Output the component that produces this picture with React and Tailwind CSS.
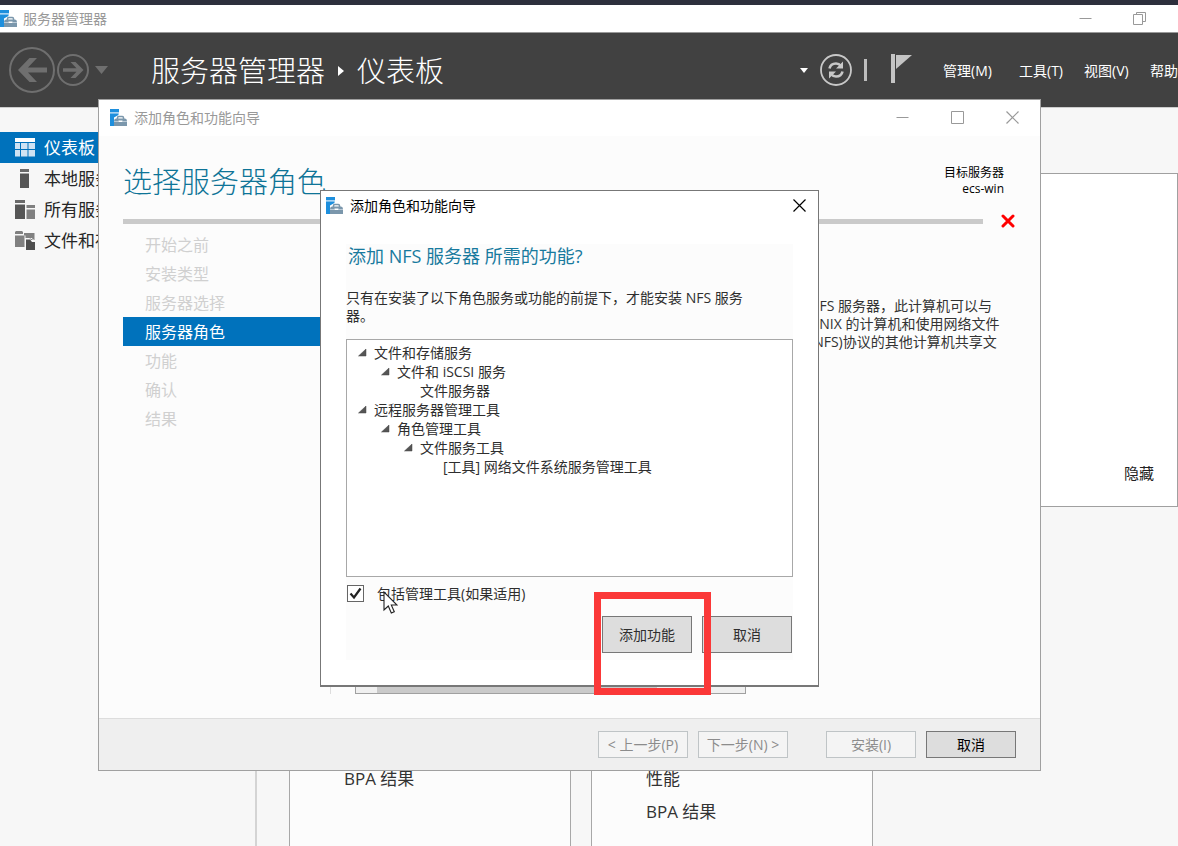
import React from "react";

function ServerIcon() {
  return (
    <svg width="18" height="17" viewBox="0 0 18 17" className="shrink-0" aria-hidden="true">
      <path d="M0 0h9v3H0z" fill="#1e8fdd" />
      <path d="M0 3h9v1.500H0z" fill="#a9d3f2" />
      <path d="M0 4.500h8.500V6L4 8.500V17H0z" fill="#1e8fdd" />
      <path d="M7.500 10V8.700q0-1.200 1.200-1.200h3.600q1.200 0 1.200 1.200V10" fill="none" stroke="#7b97ac" strokeWidth="1.500" />
      <path d="M4 12q0-2.500 2-2.500h9q2 0 2 2.500v5H4z" fill="#7b97ac" />
      <path d="M4 12.200h4.500v0.900H4zM12.500 12.200H17v0.900h-4.500z" fill="#cfdbe4" />
      <path d="M8.500 11.500h4V13h-4z" fill="#fff" />
    </svg>
  );
}

function WinIcon({ kind, className }) {
  return (
    <svg width="13" height="13" viewBox="0 0 13 13" fill="none" stroke="currentColor" className={className} aria-hidden="true">
      {kind === "min" && <path d="M0.5 6.5h12" />}
      {kind === "max" && <path d="M0.5 0.5h12v12h-12z" />}
      {kind === "close" && <path d="M0.5 0.5l12 12M12.5 0.5l-12 12" strokeWidth="1.2" />}
      {kind === "restore" && <path d="M0.5 2.5h9v10h-9zM3.5 2.5v-2h9v9h-3" />}
    </svg>
  );
}

const sideIcons = {
  dash: (
    <>
      <path d="M0 0h20v4H0z" fill="#fff" />
      <path d="M0 5h5v6H0zM0 12h5v6.500H0zM6 5h6.500v6H6zM13.500 5H20v6h-6.500zM6 12h6.500v6.500H6zM13.500 12H20v6.500h-6.500z" fill="#cfe3f3" />
    </>
  ),
  local: (
    <>
      <path d="M5 0h9v3H5z" fill="#6a6a6a" />
      <path d="M5 4.500h9V19H5z" fill="#565656" />
    </>
  ),
  all: (
    <>
      <path d="M0 0h10v3H0z" fill="#6a6a6a" />
      <path d="M0 4.500h10V19H0z" fill="#565656" />
      <path d="M11.500 5H20v3h-8.500zM11.500 9.500H20V19h-8.500z" fill="#808080" />
    </>
  ),
  files: (
    <>
      <path d="M0 1l1-1h6l1 1v2H0zM0 4.500h9.500V16H0z" fill="#808080" />
      <path d="M9 2h10.500v7H16l-1.500-2H10.500V4.500H9z" fill="#808080" />
      <path d="M11 8.500h4l2 2.500h3v8h-9z" fill="#4e4e4e" />
      <path d="M15.500 7.500h1.500l2 2v1.500" stroke="#f7f7f7" fill="none" />
    </>
  ),
};

function SideItem({ icon, label, active }) {
  return (
    <li>
      <a
        href="#"
        className={
          active
            ? "flex h-[31px] items-center gap-[9px] bg-[#0072bc] pl-[15px] text-[17px] text-white"
            : "flex h-[31px] items-center gap-[9px] pl-[15px] text-[17px] text-[#262626]"
        }
      >
        <svg width="20" height="19" viewBox="0 0 20 19" aria-hidden="true">{sideIcons[icon]}</svg>
        {label}
      </a>
    </li>
  );
}

function Tile({ rows, className }) {
  return (
    <section className={"w-[282px] border border-b-0 border-[#a8a8a8] bg-[#fcfcfc] pl-[54px] text-[17px] text-[#333] " + className}>
      {rows.map((r) => (
        <div key={r} className="flex h-[33px] items-center">{r}</div>
      ))}
    </section>
  );
}

function NavStep({ label, active }) {
  return (
    <li
      className={
        active
          ? "flex h-[29px] items-center bg-[#0072bc] pl-[22px] text-white"
          : "flex h-[29px] items-center pl-[22px] text-[#d0d0d0]"
      }
    >
      {label}
    </li>
  );
}

const indent = ["pl-[11px]", "pl-[34px]", "pl-[57px]", "pl-[80px]"];
const tree = [
  [0, "文件和存储服务", true],
  [1, "文件和 iSCSI 服务", true],
  [2, "文件服务器", false],
  [0, "远程服务器管理工具", true],
  [1, "角色管理工具", true],
  [2, "文件服务工具", true],
  [3, "[工具] 网络文件系统服务管理工具", false],
];

function MainHeader() {
  return (
    <header className="flex h-[75px] shrink-0 items-center border-t border-[#999] bg-[#414141] text-white">
      <button aria-label="后退" className="ml-[9px]">
        <svg width="46" height="46" viewBox="0 0 46 46" fill="none" aria-hidden="true">
          <circle cx="23" cy="23" r="22" stroke="#6f6f6f" strokeWidth="2" />
          <path d="M38 20.500H19l9-9.500h-7.500L9 23l11.500 12H28l-9-9.500h19z" fill="#6f6f6f" />
        </svg>
      </button>
      <button aria-label="前进" className="ml-[2px]">
        <svg width="32" height="32" viewBox="0 0 32 32" fill="none" aria-hidden="true">
          <circle cx="16" cy="16" r="15" stroke="#6f6f6f" strokeWidth="2" />
          <path d="M6 14.300h13.500l-6-6.300h5L26.500 16l-8 8h-5l6-6.300H6z" fill="#6f6f6f" />
        </svg>
      </button>
      <button aria-label="历史记录" className="ml-[6px]">
        <svg width="13" height="8" viewBox="0 0 13 8" aria-hidden="true"><path d="M0 0h13L6.500 8z" fill="#6f6f6f" /></svg>
      </button>
      <h1 className="ml-[43px] flex items-center pt-[2px] text-[29px] font-light">
        <span>服务器管理器</span>
        <svg width="6" height="10" viewBox="0 0 6 10" className="mx-[13px]" aria-hidden="true"><path d="M0 0l6 5-6 5z" fill="#fff" /></svg>
        <span>仪表板</span>
      </h1>
      <div className="ml-auto flex items-center">
        <svg width="8" height="5" viewBox="0 0 8 5" aria-hidden="true"><path d="M0 0h8L4 5z" fill="#fff" /></svg>
        <button aria-label="刷新" className="ml-[12px]">
          <svg width="32" height="32" viewBox="0 0 32 32" fill="none" aria-hidden="true">
            <circle cx="16" cy="16" r="15" stroke="#c8c8c8" strokeWidth="1.800" />
            <path d="M9.500 14.500q1-5 6.500-5 3 0 5 2.500M22.500 17.500q-1 5-6.500 5-3 0-5-2.500" stroke="#c8c8c8" strokeWidth="2.600" />
            <path d="M23 7.500v7h-7zM9 24.500v-7h7z" fill="#c8c8c8" />
          </svg>
        </button>
        <span className="ml-[12px] h-[22px] w-[3px] bg-[#bdbdbd]" />
        <button aria-label="通知" className="ml-[24px] pb-[4px]">
          <svg width="21" height="29" viewBox="0 0 21 29" aria-hidden="true">
            <path d="M0 0h4v29H0z" fill="#c4c4c4" />
            <path d="M5 1h16L5 15z" fill="#c4c4c4" />
          </svg>
        </button>
        <nav className="ml-[31px] flex gap-[18px] text-[14px] whitespace-nowrap">
          <a href="#" className="w-[58px] shrink-0">管理(M)</a>
          <a href="#" className="w-[47px] shrink-0">工具(T)</a>
          <a href="#" className="w-[48px] shrink-0">视图(V)</a>
          <a href="#" className="shrink-0">帮助</a>
        </nav>
      </div>
    </header>
  );
}

function Wizard() {
  return (
    <section className="absolute top-[99px] left-[98px] flex h-[672px] w-[943px] flex-col border border-[#a0a0a0] bg-[#fcfcfc]">
      <div className="flex h-[36px] shrink-0 items-center bg-white pb-[2px] pl-[11px] text-[14px] text-[#999]">
        <ServerIcon />
        <span className="ml-[6px]">添加角色和功能向导</span>
        <div className="mr-[21px] ml-auto flex gap-[42px]">
          <button aria-label="最小化"><WinIcon kind="min" /></button>
          <button aria-label="最大化"><WinIcon kind="max" /></button>
          <button aria-label="关闭"><WinIcon kind="close" /></button>
        </div>
      </div>
      <div className="flex h-[78px] shrink-0 items-start justify-between pt-[24px] pr-[36px] pl-[24px]">
        <h2 className="text-[29px] leading-[44px] font-light text-[#0e7497]">选择服务器角色</h2>
        <p className="pt-[5px] text-right text-[12px] leading-[16px] text-black">目标服务器<br />ecs-win</p>
      </div>
      <div className="flex h-[14px] shrink-0 items-center justify-between pr-[25px] pl-[24px]">
        <div className="mr-[18px] h-[5px] flex-1 bg-[#cacaca]" />
        <svg width="14" height="14" viewBox="0 0 14 14" aria-hidden="true"><path d="M2 2l10 10M12 2L2 12" stroke="#f00" strokeWidth="3" strokeLinecap="round" /></svg>
      </div>
      <div className="flex flex-1 items-stretch pb-[24px] pl-[24px]">
        <ol className="w-[208px] border-r border-[#ddd] pt-[2px] text-[16px]">
          <NavStep label="开始之前" />
          <NavStep label="安装类型" />
          <NavStep label="服务器选择" />
          <NavStep label="服务器角色" active />
          <NavStep label="功能" />
          <NavStep label="确认" />
          <NavStep label="结果" />
        </ol>
        <div className="ml-[24px] flex h-[18px] w-[391px] self-end border border-[#a0a0a0] bg-[#f0f0f0] pl-[21px]">
          <div className="w-[280px] bg-[#cacaca]" />
        </div>
        <p className="ml-[63px] pt-[69px] text-[14px] leading-[18px] whitespace-nowrap text-[#333]">
          NFS 服务器，此计算机可以与<br />UNIX 的计算机和使用网络文件<br />(NFS)协议的其他计算机共享文
        </p>
      </div>
      <footer className="flex h-[52px] shrink-0 items-center justify-end border-t border-[#ddd] bg-[#efefef] pr-[24px] text-[14px]">
        <button disabled className="h-[27px] w-[90px] border border-[#bfc4c6] bg-[#f4f4f4] text-[#8c8c8c]">&lt; 上一步(P)</button>
        <button disabled className="ml-[10px] h-[27px] w-[90px] border border-[#bfc4c6] bg-[#f4f4f4] text-[#8c8c8c]">下一步(N) &gt;</button>
        <button disabled className="ml-[38px] h-[27px] w-[90px] border border-[#bfc4c6] bg-[#f4f4f4] text-[#8c8c8c]">安装(I)</button>
        <button className="ml-[10px] h-[27px] w-[90px] border border-[#777] bg-[#ddd] text-black">取消</button>
      </footer>
    </section>
  );
}

function FeatureDialog() {
  return (
    <section role="dialog" aria-label="添加角色和功能向导" className="absolute top-[190px] left-[320px] flex h-[497px] w-[499px] flex-col border border-b-2 border-[#777] bg-white">
      <div className="flex h-[28px] shrink-0 items-center pr-[12px] pl-[5px] text-[14px] text-black">
        <ServerIcon />
        <span className="ml-[6px]">添加角色和功能向导</span>
        <button aria-label="关闭" className="ml-auto"><WinIcon kind="close" /></button>
      </div>
      <div className="mx-[25px] mt-[25px] flex h-[416px] flex-col bg-[#fcfcfc] text-[14px] text-[#2e2e2e]">
        <h3 className="pl-[2px] text-[18px] leading-[24px] text-[#187a9e]">添加 NFS 服务器 所需的功能?</h3>
        <p className="mt-[21px] leading-[18px]">只有在安装了以下角色服务或功能的前提下，才能安装 NFS 服务<br />器。</p>
        <ul className="mt-[14px] h-[238px] shrink-0 border border-[#a8a8a8] bg-white pt-[3px]">
          {tree.map(([level, label, open]) => (
            <li key={label} className={"flex h-[19px] items-center " + indent[level]}>
              <span className="w-[16px]">
                {open && (
                  <svg width="9" height="9" viewBox="0 0 9 9" aria-hidden="true"><path d="M8 1v7H0.500z" fill="#555" stroke="#444" strokeWidth="0.500" /></svg>
                )}
              </span>
              {label}
            </li>
          ))}
        </ul>
        <label className="mt-[6px] flex h-[20px] items-center">
          <span className="relative ml-[1px] flex">
            <input type="checkbox" defaultChecked className="h-[17px] w-[17px] appearance-none border border-[#666] bg-white" />
            <svg width="17" height="17" viewBox="0 0 17 17" className="pointer-events-none absolute inset-0" aria-hidden="true"><path d="M3.500 8.500l3.500 4L13.500 3.500" fill="none" stroke="#222" strokeWidth="2.200" /></svg>
          </span>
          <span className="ml-[13px]">包括管理工具(如果适用)</span>
        </label>
        <div className="mt-[13px] flex justify-end gap-[10px] pr-[1px]">
          <button className="h-[37px] w-[90px] border border-[#777] bg-[#ddd]">添加功能</button>
          <button className="h-[37px] w-[90px] border border-[#777] bg-[#ddd]">取消</button>
        </div>
      </div>
    </section>
  );
}

export default function App() {
  return (
    <div className="relative flex h-screen w-full flex-col overflow-hidden bg-[#f7f7f7] font-['Open_Sans','Noto_Sans_CJK_SC',sans-serif]">
      <div className="h-[5px] shrink-0 bg-[#2d2f3c]" />
      <div className="flex h-[27px] shrink-0 items-center bg-white text-[14px] text-[#999]">
        <ServerIcon />
        <span className="ml-[5px]">服务器管理器</span>
        <div className="mr-[32px] ml-auto flex gap-[41px]">
          <button aria-label="最小化"><WinIcon kind="min" /></button>
          <button aria-label="还原"><WinIcon kind="restore" /></button>
        </div>
      </div>
      <MainHeader />
      <div className="flex flex-1 border-t border-[#ccc]">
        <ul className="w-[257px] shrink-0 border-r-2 border-[#d4d4d4] pt-[24px]">
          <SideItem icon="dash" label="仪表板" active />
          <SideItem icon="local" label="本地服务器" />
          <SideItem icon="all" label="所有服务器" />
          <SideItem icon="files" label="文件和存储服务" />
        </ul>
        <main className="flex flex-1 flex-col pt-[65px] pl-[32px]">
          <section className="flex h-[334px] shrink-0 items-end justify-end border border-[#a0a0a0] bg-white pr-[23px] pb-[22px]">
            <button className="text-[15px] text-[#222]">隐藏</button>
          </section>
          <div className="mt-[19px] flex flex-1 gap-[20px]">
            <Tile className="pt-[235px]" rows={["BPA 结果"]} />
            <Tile className="pt-[235px]" rows={["性能", "BPA 结果"]} />
          </div>
        </main>
      </div>
      <Wizard />
      <FeatureDialog />
      <div className="pointer-events-none absolute top-[592px] left-[594px] h-[103px] w-[117px] border-[7px] border-[#fb3838]" />
      <svg width="15" height="24" viewBox="0 0 15 24" className="pointer-events-none absolute top-[591px] left-[383px]" aria-hidden="true">
        <path d="M1 1v18l4.300-4 3 7 3-1.300-3-6.700H14z" fill="#fff" stroke="#222" strokeWidth="1.100" />
      </svg>
    </div>
  );
}
